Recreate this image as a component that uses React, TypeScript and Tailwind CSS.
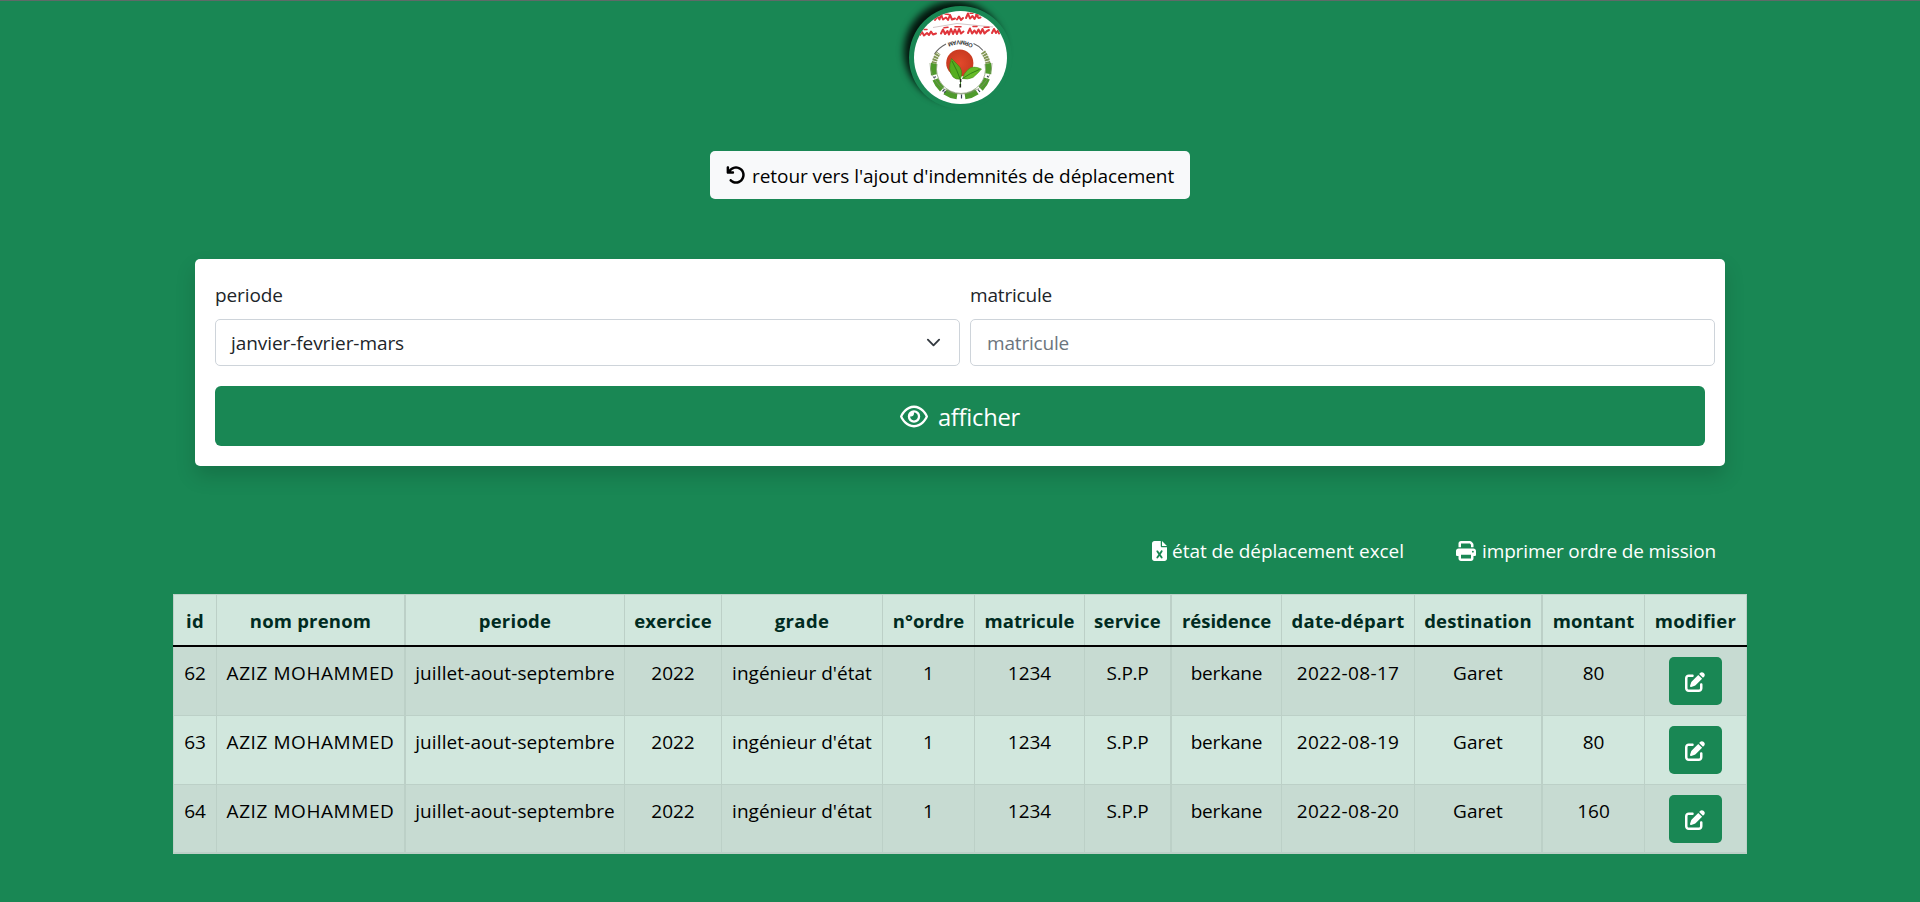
import {
  FaArrowRotateLeft,
  FaFileExcel,
  FaPenToSquare,
  FaPrint,
  FaRegEye,
} from "react-icons/fa6";

const columns = [
  { label: "id", width: "w-[44px]", head: "tracking-[0.2px]", cell: "", edge: "border-l border-r" },
  { label: "nom prenom", width: "w-[189px]", head: "tracking-[0.2px]", cell: "tracking-[0.57px]", edge: "border-r-2" },
  { label: "periode", width: "w-[219px]", head: "tracking-[0.25px]", cell: "tracking-[0.1px]", edge: "border-r" },
  { label: "exercice", width: "w-[97px]", head: "tracking-[0.1px]", cell: "", edge: "border-r" },
  { label: "grade", width: "w-[161px]", head: "tracking-[0.4px]", cell: "tracking-[0.02px]", edge: "border-r" },
  { label: "n°ordre", width: "w-[92px]", head: "tracking-[0.04px]", cell: "", edge: "border-r" },
  { label: "matricule", width: "w-[110px]", head: "tracking-[0.04px]", cell: "", edge: "border-r" },
  { label: "service", width: "w-[87px]", head: "tracking-[0.25px]", cell: "tracking-[-0.3px]", edge: "border-r-2" },
  { label: "résidence", width: "w-[110px]", head: "tracking-[-0.04px]", cell: "tracking-[-0.18px]", edge: "border-r" },
  { label: "date-départ", width: "w-[133px]", head: "tracking-[0.3px]", cell: "tracking-[0.35px]", edge: "border-r" },
  { label: "destination", width: "w-[128px]", head: "tracking-[0.12px]", cell: "tracking-[0.04px]", edge: "border-r-2" },
  { label: "montant", width: "w-[102px]", head: "tracking-[0.05px]", cell: "", edge: "border-r" },
  { label: "modifier", width: "w-[102px]", head: "tracking-[0.3px]", cell: "", edge: "border-r" },
];

const rows = [
  { id: "62", date: "2022-08-17", amount: "80", style: "h-[69px] bg-[#c7dbd2] border-b" },
  { id: "63", date: "2022-08-19", amount: "80", style: "h-[69px] bg-[#d1e7dd] border-b" },
  { id: "64", date: "2022-08-20", amount: "160", style: "h-[69px] bg-[#c7dbd2] border-b-2" },
];

const crownLetters = [
  { ch: "O", x: 33.5, y: 38.5, turn: -22 },
  { ch: "R", x: 38, y: 40.5, turn: -12 },
  { ch: "M", x: 42, y: 41.5, turn: -4 },
  { ch: "V", x: 47, y: 41.5, turn: 4 },
  { ch: "A", x: 51, y: 41, turn: 12 },
  { ch: "M", x: 55, y: 40, turn: 20 },
];

function Logo() {
  return (
    <div className="h-[103px] w-[103px] rounded-full bg-[#198754] p-[5px] shadow-[-6px_-6px_7px_-1px_rgba(0,0,0,0.85)]">
      <svg viewBox="0 0 93 93" className="block h-[93px] w-[93px]">
        <defs>
          <clipPath id="disc">
            <circle cx="46.5" cy="46.5" r="46.5" />
          </clipPath>
          <radialGradient id="fruit">
            <stop offset="0" stopColor="#e2492b" />
            <stop offset="1" stopColor="#c93a20" />
          </radialGradient>
        </defs>
        <g clipPath="url(#disc)">
          <rect width="93" height="93" fill="#fff" />
          <g transform="translate(0 -5)">
            <path d="M19 21.500l24-4 36 3.500" fill="none" stroke="#c9b9bb" strokeWidth=".8" />
            <g fill="none" stroke="#e0353b" strokeWidth="2" strokeLinecap="round" strokeLinejoin="round">
              <path d="M21 14l2.500-3.500 2 3 1.500-5 2 5 3-2 2 2.500 2-5 2 4.500 3-1M43 13.500l2-3 2 3.500 2-2M52 12l2-4.500 2 5 2.500-2.500 2 3 2-4 2 3 2-.5" />
              <path d="M24 8.800h4M31 8l4 .5M56 7.200h3M62 8.500l3 .5" strokeWidth="1.500" />
              <path d="M6 29l2-3 2 3.500 3-2.500 2 2 2-3.500 2 3 3-1M27 27.500l2-4 2 4.500 2.500-3 1.500 3.500 2-5.500 2 5 2-4.500 2 4.500 2-5 2 4.500 2.500-2M54 27l2-4.500 2 5 2.500-3 2 3 2-4 2 4 2-4.500 2 4.500 2.500-2.500 2-1M78 27l2-4 2 4 2-2.500 1 3" />
              <path d="M10 23.500h3M30 21.800l4-.5M41 20.800h6M59 20.500h4M70 21.300h5" strokeWidth="1.500" />
            </g>
          </g>
          <path d="M20.500 43Q25 36.500 32 33M59.500 32.500Q65.500 35 69 39.500" fill="none" stroke="#666" strokeWidth="1.100" />
          <g fill="none" stroke="#829654" strokeWidth="5" strokeDasharray="2 .7">
            <path d="M20 52.500A27.700 27.700 0 0 1 24.500 42" />
            <path d="M74 52.500A27.700 27.700 0 0 0 69 41" />
          </g>
          <g fill="none" stroke="#4f9a2c" strokeWidth="6">
            <path d="M74 52.500A27.700 27.700 0 0 1 74.300 62.800" />
            <path d="M73 67.500A27.700 27.700 0 0 1 66.600 77.600" />
            <path d="M62.900 80.700A27.700 27.700 0 0 1 51 85.400" />
            <path d="M43 85.400A27.700 27.700 0 0 1 31.100 80.700" />
            <path d="M28.100 78.300A27.700 27.700 0 0 1 21.300 68.400" />
            <path d="M19.900 63.800A27.700 27.700 0 0 1 20 52.500" />
          </g>
          <g fill="none" stroke="#7f946c" strokeWidth=".7">
            <path d="M16 52A31 31 0 1 0 78 52" />
            <path d="M23 53A24.500 24.500 0 1 0 71 53" />
          </g>
          <g fill="none" stroke="#343c52" strokeWidth="1.200">
            <path d="M19.500 66.500l2.500-.8M28.500 80.500l2-2.200M30 81.500l1.800-1M47.500 83.500v4M64 78.500l2 2.500M74.500 66l-1.500-1" />
          </g>
          <circle cx="45.800" cy="52" r="13.600" fill="url(#fruit)" />
          <path d="M37.500 47.500Q33 59 39 66Q42 69 46.500 68Q50 59 43.500 53.500Z" fill="#55ae1f" stroke="#397e12" strokeWidth=".5" />
          <path d="M48.500 67.500Q53 69 59 66.500Q64 62.500 67.500 58Q59 54 54 58.500Q50 62 48.500 67.500Z" fill="#66bb28" stroke="#3c8714" strokeWidth=".5" />
          <path d="M38 50Q43.500 60 46.500 69V73M48.500 67.500Q56 62 65.500 58.500" fill="none" stroke="#2e7a16" strokeWidth=".9" />
          <path d="M46.600 68v3M46.300 73v3.500" stroke="#1f2d18" strokeWidth="1.600" />
          <g
            transform="rotate(180 46.500 35.500)"
            fill="#333"
            fontFamily="Liberation Sans, sans-serif"
            fontSize="5.800"
            fontWeight="700"
          >
            {crownLetters.map((l) => (
              <text key={l.x} x={l.x} y={l.y} transform={`rotate(${-l.turn} ${l.x + 2} ${l.y})`}>
                {l.ch}
              </text>
            ))}
          </g>
        </g>
      </svg>
    </div>
  );
}

function EditButton() {
  return (
    <button className="mx-auto -mt-px flex h-12 w-[53px] items-center justify-center rounded-[5px] bg-[#198754] pr-[2px] pt-[2px] text-white">
      <FaPenToSquare className="h-5 w-5" />
    </button>
  );
}

export default function App() {
  return (
    <div className="flex h-[902px] w-[1920px] flex-col items-center overflow-hidden border-t border-[#5f6a68] bg-[#198754] font-['Open_Sans',sans-serif] text-[19px] leading-[30px] text-[#212529]">
      <div className="ml-px mt-[5px] flex h-[100px]">
        <Logo />
      </div>

      <button className="mr-5 mt-[45px] flex h-12 w-[480px] items-center gap-[6px] whitespace-nowrap rounded-[5px] bg-[#f8f9fa] pl-4 text-black">
        <FaArrowRotateLeft className="h-5 w-5" />
        <span className="pt-[2px] tracking-[-0.06px]">retour vers l'ajout d'indemnités de déplacement</span>
      </button>

      <form className="mt-[60px] h-[207px] w-[1530px] rounded-[5px] bg-white pl-5 pt-5 shadow-[0_10px_20px_rgba(0,0,0,0.15)]">
        <div className="flex gap-[10px]">
          <div className="w-[745px]">
            <label className="block h-10 pt-[1px] tracking-[-0.1px]">periode</label>
            <div className="flex h-[47px] items-center justify-between rounded-[5px] border border-[#ced4da] pl-[15px] pr-[18px]">
              <span className="tracking-[-0.07px]">janvier-fevrier-mars</span>
              <svg viewBox="0 0 16 16" className="h-[15px] w-[15px]" fill="none" stroke="#343a40" strokeWidth="2" strokeLinecap="round" strokeLinejoin="round">
                <path d="m2 5 6 6 6-6" />
              </svg>
            </div>
          </div>
          <div className="w-[745px]">
            <label className="block h-10 pt-[1px] tracking-[-0.18px]">matricule</label>
            <div className="flex h-[47px] items-center rounded-[5px] border border-[#ced4da] pl-4 tracking-[-0.18px] text-[#6c757d]">
              matricule
            </div>
          </div>
        </div>
        <button type="button" className="mt-5 flex h-[60px] w-[1490px] items-center justify-center gap-[10px] rounded-[6px] bg-[#198754] text-[23.75px] text-white">
          <FaRegEye className="h-[25px] w-[28px]" />
          <span className="pt-px tracking-[-0.25px]">afficher</span>
        </button>
      </form>

      <div className="mt-[70px] flex h-[30px] w-[1574px] items-center whitespace-nowrap pl-[979px] text-white">
        <FaFileExcel className="h-5 w-[15px]" />
        <span className="ml-[5px] w-[284px] tracking-[-0.03px]">état de déplacement excel</span>
        <FaPrint className="h-5 w-5" />
        <span className="ml-[6px] tracking-[-0.13px]">imprimer ordre de mission</span>
      </div>

      <table className="mt-7 w-[1574px] table-fixed border-separate border-spacing-0 text-center">
        <thead>
          <tr>
            {columns.map((c) => (
              <th
                key={c.label}
                className={`${c.width} ${c.head} ${c.edge} h-[51px] whitespace-nowrap border-t border-[#bcd0c7] bg-[#d1e7dd] p-0 pt-[2px] align-middle text-[18.5px] font-bold text-[#002b21]`}
              >
                {c.label}
              </th>
            ))}
          </tr>
        </thead>
        <tbody>
          <tr>
            <td colSpan={13} className="h-[2px] bg-black p-0" />
          </tr>
          {rows.map((r) => {
            const values = [
              r.id,
              "AZIZ MOHAMMED",
              "juillet-aout-septembre",
              "2022",
              "ingénieur d'état",
              "1",
              "1234",
              "S.P.P",
              "berkane",
              r.date,
              "Garet",
              r.amount,
            ];
            return (
              <tr key={r.id}>
                {columns.map((c, i) => (
                  <td
                    key={c.label}
                    className={`${c.cell} ${c.edge} ${r.style} whitespace-nowrap border-[#bcd0c7] p-0 pt-[11px] align-top text-black`}
                  >
                    {i < values.length ? values[i] : <EditButton />}
                  </td>
                ))}
              </tr>
            );
          })}
        </tbody>
      </table>
    </div>
  );
}
